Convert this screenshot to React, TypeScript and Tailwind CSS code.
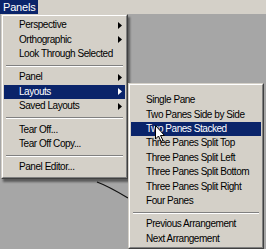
import React from "react";

type Item = { label: string; sub?: boolean; active?: boolean } | "sep";

const panelItems: Item[] = [
  { label: "Perspective", sub: true },
  { label: "Orthographic", sub: true },
  { label: "Look Through Selected" },
  "sep",
  { label: "Panel", sub: true },
  { label: "Layouts", sub: true, active: true },
  { label: "Saved Layouts", sub: true },
  "sep",
  { label: "Tear Off..." },
  { label: "Tear Off Copy..." },
  "sep",
  { label: "Panel Editor..." },
];

const layoutItems: Item[] = [
  { label: "Single Pane" },
  { label: "Two Panes Side by Side" },
  { label: "Two Panes Stacked", active: true },
  { label: "Three Panes Split Top" },
  { label: "Three Panes Split Left" },
  { label: "Three Panes Split Bottom" },
  { label: "Three Panes Split Right" },
  { label: "Four Panes" },
  "sep",
  { label: "Previous Arrangement" },
  { label: "Next Arrangement" },
];

function SubArrow({ light }: { light?: boolean }) {
  return (
    <svg width="4" height="7" viewBox="0 0 4 7" className="shrink-0" aria-hidden="true">
      <polygon points="0,0 4,3.5 0,7" fill={light ? "#ffffff" : "#000000"} />
    </svg>
  );
}

function MenuRows({ items }: { items: Item[] }) {
  return (
    <>
      {items.map((item, i) =>
        item === "sep" ? (
          <div key={i} className="flex h-[9px] items-center px-[2px]">
            <div className="h-[2px] w-full border-t border-b border-t-[#808080] border-b-white" />
          </div>
        ) : (
          <div
            key={i}
            className={`flex h-[14.4px] items-center justify-between pl-[15px] pr-[3px] ${item.active ? "bg-[#0a246a] text-white" : "text-black"}`}
          >
            <span className="whitespace-nowrap">{item.label}</span>
            {item.sub && <SubArrow light={item.active} />}
          </div>
        )
      )}
    </>
  );
}

export default function App() {
  return (
    <div className="relative h-[249px] w-[266px] overflow-hidden bg-[#a6a6a6] font-['Liberation_Sans',Arial,sans-serif] text-[10px] leading-none tracking-[-0.45px]">
      <div className="flex h-[14px] bg-[#d4d0c8]">
        <div className="flex items-center bg-[#0a246a] px-[3px] text-[11px] tracking-[-0.2px] text-white">Panels</div>
      </div>

      <svg width="266" height="235" className="block" aria-hidden="true">
        <path d="M97 168 C 108 172, 118 178, 128 184" stroke="#111" strokeWidth="1.3" fill="none" />
      </svg>

      <div className="absolute left-[1px] top-[14px] w-[127px] border border-t-[#d4d0c8] border-l-[#d4d0c8] border-r-[#404040] border-b-[#404040] bg-[#d4d0c8] shadow-[2px_3px_2px_rgba(0,0,0,0.45)]">
        <div className="border border-t-white border-l-white border-r-[#808080] border-b-[#808080] px-[1px] pt-[2px] pb-[2px]">
          <MenuRows items={panelItems} />
        </div>
      </div>

      <div className="absolute left-[128px] top-[83px] w-[136px] border border-t-[#d4d0c8] border-l-[#d4d0c8] border-r-[#404040] border-b-[#404040] bg-[#d4d0c8]">
        <div className="border border-t-white border-l-white border-r-[#808080] border-b-[#808080] px-[1px] pt-[8px] pb-[1px]">
          <MenuRows items={layoutItems} />
        </div>
      </div>

      <svg width="11" height="18" viewBox="0 0 11 18" className="absolute left-[155px] top-[125px]" aria-hidden="true">
        <path d="M0.5 0.5 L0.5 14 L3.5 11 L6 16.5 L8 15.5 L5.5 10.5 L9.5 10.5 Z" fill="#fff" stroke="#000" strokeWidth="1" />
      </svg>
    </div>
  );
}
